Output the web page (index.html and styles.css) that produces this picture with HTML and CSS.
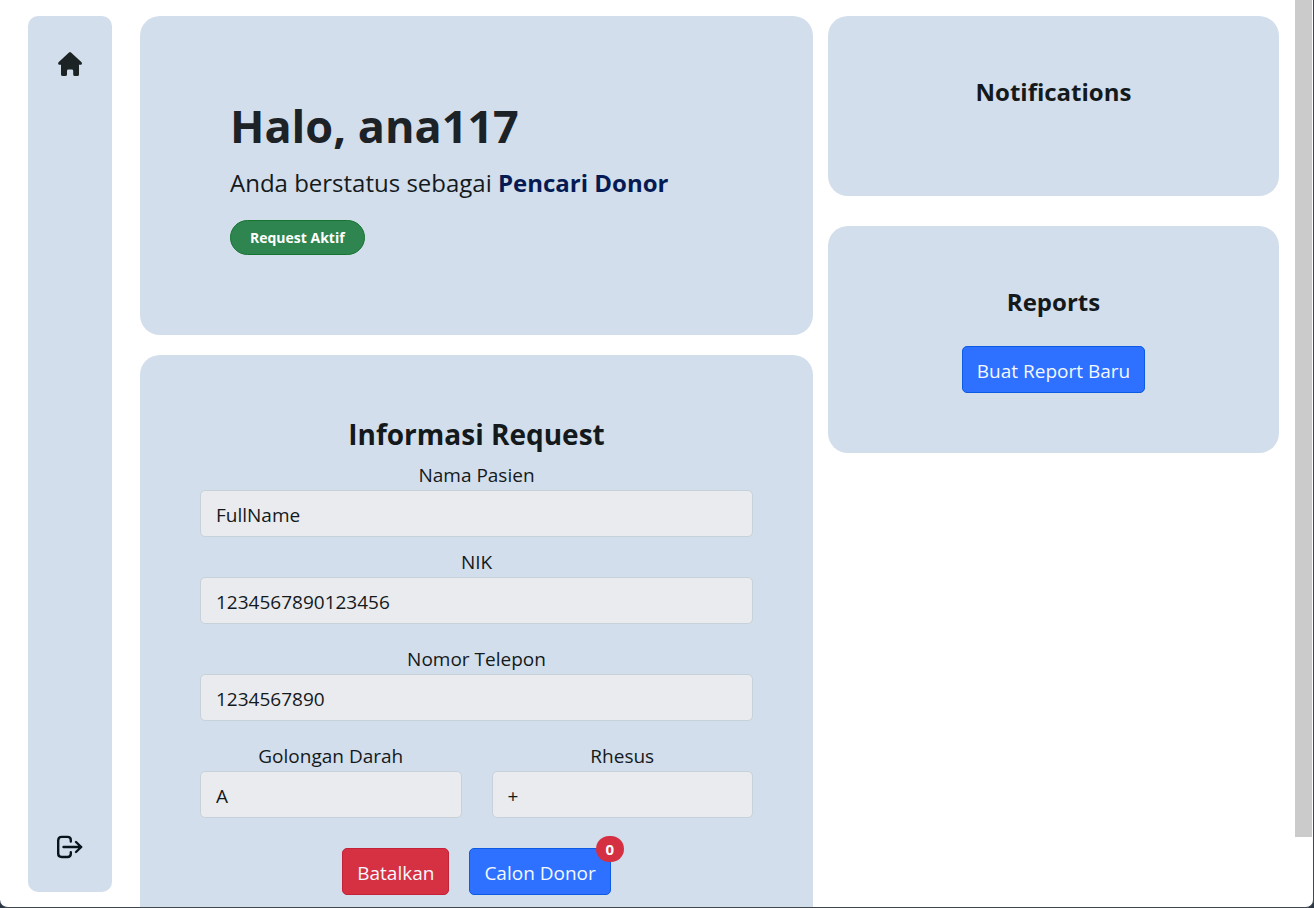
FILE: index.html
```html
<!DOCTYPE html>
<html lang="id">
<head>
<meta charset="utf-8">
<title>Dashboard</title>
<link rel="stylesheet" href="styles.css">
</head>
<body>
<div class="window">
  <nav class="sidebar">
    <a class="nav-link" href="#" aria-label="Home">
      <svg class="icon" viewBox="0 0 28 28"><path d="M13 2.500 Q14 1.600 15 2.500 L25.600 12.200 Q26.500 13.400 25.400 14.800 H23 V24.400 Q23 26 21.400 26 H19 Q17.200 26 17.200 24.400 V21 Q17.200 19.600 15.800 19.600 H12.400 Q11 19.600 11 21 V24.400 Q11 26 9.300 26 H6.800 Q5 26 5 24.400 V14.800 H2.800 Q1.500 13.400 2.500 12.200 Z" fill="#1b2324"/></svg>
    </a>
    <a class="nav-link" href="#" aria-label="Logout">
      <svg class="icon" viewBox="0 0 28 28" fill="none" stroke="#08141c" stroke-width="2.4" stroke-linecap="round" stroke-linejoin="round"><path d="M14.800 8.600 V7 Q14.800 3.900 11.500 3.900 H5.700 Q2.200 3.900 2.200 7.400 V20.600 Q2.200 24 5.700 24 H11.500 Q14.800 24 14.800 20.800 V19.200"/><path d="M7.500 14 H25.200 M20 9 L25.200 14 L20 19"/></svg>
    </a>
  </nav>
  <main class="content">
    <div class="column column-main">
      <section class="card hero">
        <h1 class="hero-title">Halo, ana117</h1>
        <p class="hero-status">Anda berstatus sebagai <strong class="role">Pencari Donor</strong></p>
        <span class="status-pill">Request Aktif</span>
      </section>
      <section class="card">
        <h2 class="form-title">Informasi Request</h2>
        <form class="form">
          <div class="field field-first">
            <label for="nama">Nama Pasien</label>
            <input id="nama" type="text" value="FullName" readonly>
          </div>
          <div class="field">
            <label for="nik">NIK</label>
            <input id="nik" type="text" value="1234567890123456" readonly>
          </div>
          <div class="field">
            <label for="telepon">Nomor Telepon</label>
            <input id="telepon" type="text" value="1234567890" readonly>
          </div>
          <div class="field-row">
            <div class="field">
              <label for="darah">Golongan Darah</label>
              <input id="darah" type="text" value="A" readonly>
            </div>
            <div class="field">
              <label for="rhesus">Rhesus</label>
              <input id="rhesus" type="text" value="+" readonly>
            </div>
          </div>
          <div class="actions">
            <button class="btn btn-danger" type="button">Batalkan</button>
            <button class="btn btn-primary" type="button">Calon Donor<span class="count">0</span></button>
          </div>
        </form>
      </section>
    </div>
    <div class="column column-side">
      <section class="card">
        <h3 class="card-title">Notifications</h3>
      </section>
      <section class="card">
        <h3 class="card-title">Reports</h3>
        <button class="btn btn-primary" type="button">Buat Report Baru</button>
      </section>
    </div>
  </main>
  <div class="scroll-track"><div class="scroll-thumb"></div></div>
</div>
</body>
</html>
```
FILE: styles.css
```css
* {
  box-sizing: border-box;
}

body {
  margin: 0;
  background: #2b3744;
  color: #14191c;
  font-family: "Open Sans", "Noto Sans", sans-serif;
  font-size: 19px;
  line-height: 30px;
}

.window {
  display: flex;
  height: 100vh;
  overflow: hidden;
  background: #fff;
  border: solid #41474e;
  border-width: 0 1px 1px 0;
  border-radius: 0 0 8px 8px;
}

.sidebar {
  display: flex;
  flex: none;
  flex-direction: column;
  align-items: center;
  justify-content: space-between;
  width: 84px;
  margin: 16px 28px 15px;
  padding: 34px 0 31px;
  background: #d2deeb;
  border-radius: 10px;
}

.nav-link,
.icon {
  display: block;
  width: 28px;
  height: 28px;
}

.content {
  display: grid;
  flex: 1;
  grid-template-columns: 673fr 451fr;
  gap: 15px;
  align-items: start;
  padding: 16px 16px 0 0;
}

.column {
  display: flex;
  flex-direction: column;
}

.column-main {
  gap: 20px;
}

.column-side {
  gap: 30px;
}

.card {
  padding: 60px;
  background: #d2deeb;
  border-radius: 20px;
  text-align: center;
}

.hero {
  padding: 80px 90px;
  text-align: left;
}

.hero-title {
  margin: 0 0 8px;
  color: #1c2226;
  font-size: 45px;
  line-height: 60px;
}

.hero-status {
  margin: 0 0 18px;
  font-size: 24px;
  line-height: 38px;
}

.role {
  color: #051a53;
}

.status-pill {
  display: block;
  width: fit-content;
  padding: 0 19px;
  background: #2f8550;
  border: 1px solid #167330;
  border-radius: 18px;
  color: #fff;
  font-size: 14px;
  font-weight: 700;
  line-height: 33px;
}

.form-title {
  margin: 0 0 7px;
  font-size: 28px;
  line-height: 38px;
}

.card-title {
  margin: 0 0 28px;
  font-size: 24px;
  line-height: 32px;
}

.form,
.field {
  display: flex;
  flex-direction: column;
}

.form {
  gap: 20px;
}

.field-first {
  margin-bottom: -10px;
}

.field-row {
  display: grid;
  grid-template-columns: 1fr 1fr;
  gap: 30px;
}

.field input {
  width: 100%;
  height: 47px;
  padding: 2px 15px 0;
  background: #e9ebee;
  border: 1px solid #c6d1da;
  border-radius: 5px;
  color: inherit;
  font: inherit;
}

.actions {
  display: flex;
  justify-content: center;
  gap: 20px;
  margin-top: 10px;
}

.btn {
  position: relative;
  height: 47px;
  padding: 2px 14px 0;
  border: 1px solid;
  border-radius: 5px;
  color: #f4f8ff;
  font: inherit;
}

.btn-primary {
  background: #2e70ff;
  border-color: #0d5be0;
}

.btn-danger {
  background: #d63142;
  border-color: #c42238;
}

.count {
  position: absolute;
  top: -13px;
  right: -14px;
  width: 28px;
  background: #d43042;
  border-radius: 13px;
  color: #fff;
  font-size: 15px;
  font-weight: 700;
  line-height: 26px;
}

.scroll-track {
  flex: none;
  width: 18px;
  padding-right: 1px;
}

.scroll-thumb {
  height: 92.3%;
  background: #cbcbcb;
}
```
